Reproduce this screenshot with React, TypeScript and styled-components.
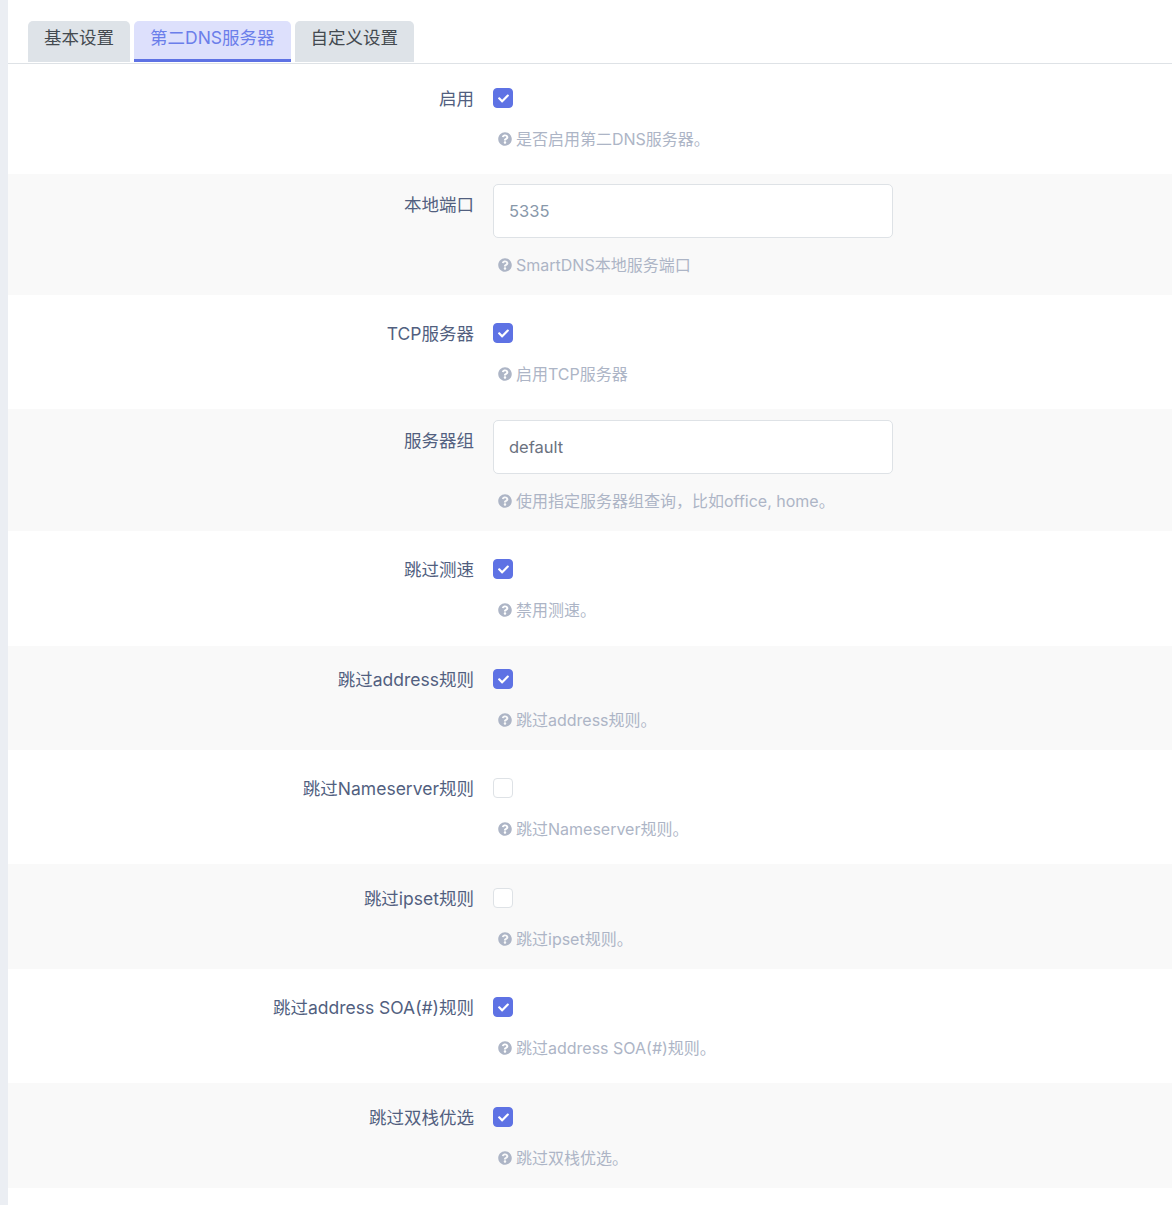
import React from "react";
import styled, { createGlobalStyle } from "styled-components";
import { FaCheck, FaQuestionCircle } from "react-icons/fa";

const GlobalStyle = createGlobalStyle`
  html, body {
    margin: 0;
    padding: 0;
    background: #ebeef3;
  }
  body {
    font-family: Inter, "Noto Sans CJK SC", sans-serif;
    -webkit-font-smoothing: antialiased;
  }
`;

const Page = styled.div`
  margin-left: 8px;
  height: 1205px;
  overflow: hidden;
  background: #fff;
`;

const TabBar = styled.ul`
  display: flex;
  gap: 4px;
  margin: 0;
  padding: 21px 20px 0;
  list-style: none;
  border-bottom: 1px solid #dee2e6;
  height: 42px;
`;

const Tab = styled.li<{ $active?: boolean }>`
  box-sizing: border-box;
  height: 41px;
  padding: 0 16px;
  border-radius: 5px 5px 0 0;
  font-size: 17.5px;
  line-height: 33px;
  background: ${({ $active }) => ($active ? "#dde0fc" : "#dee3e8")};
  color: ${({ $active }) => ($active ? "#6b7eea" : "#444a50")};
  border-bottom: 3px solid ${({ $active }) => ($active ? "#5e72e4" : "transparent")};
`;

const Row = styled.div<{ $height: number; $top: number; $shaded: boolean }>`
  box-sizing: border-box;
  display: grid;
  grid-template-columns: 466px 1fr;
  column-gap: 19px;
  height: ${({ $height }) => $height}px;
  padding-top: ${({ $top }) => $top}px;
  background: ${({ $shaded }) => ($shaded ? "#f9f9f9" : "#fff")};
`;

const Label = styled.label<{ $input: boolean }>`
  text-align: right;
  font-size: 17.5px;
  line-height: 22px;
  color: #525f7f;
  padding-top: ${({ $input }) => ($input ? "10px" : "0")};
`;

const Field = styled.div`
  display: flex;
  flex-direction: column;
  align-items: flex-start;
`;

const Box = styled.span<{ $on: boolean }>`
  box-sizing: border-box;
  display: flex;
  align-items: center;
  justify-content: center;
  width: 20px;
  height: 20px;
  border-radius: 4px;
  border: 1px solid ${({ $on }) => ($on ? "#5e72e4" : "#dee2e6")};
  background: ${({ $on }) => ($on ? "#5e72e4" : "#fff")};
  color: #fff;
  font-size: 11px;
`;

const TextInput = styled.div`
  box-sizing: border-box;
  width: 400px;
  height: 54px;
  padding: 0 15px;
  border: 1px solid #dee2e6;
  border-radius: 5px;
  background: #fff;
  font-size: 16.5px;
  line-height: 52px;
  color: #8898aa;
`;

const Hint = styled.div<{ $input: boolean }>`
  display: flex;
  align-items: center;
  gap: 4px;
  margin-top: ${({ $input }) => ($input ? "17px" : "21px")};
  padding-left: 5px;
  font-size: 16px;
  line-height: 20px;
  color: #adb5c6;
  white-space: nowrap;
  svg {
    font-size: 14px;
    flex: none;
  }
`;

type Item = {
  label: string;
  hint: string;
  height: number;
  top: number;
  checked?: boolean;
  value?: string;
  dark?: boolean;
};

const items: Item[] = [
  { label: "启用", hint: "是否启用第二DNS服务器。", height: 110, top: 24, checked: true },
  { label: "本地端口", hint: "SmartDNS本地服务端口", height: 121, top: 10, value: "5335" },
  { label: "TCP服务器", hint: "启用TCP服务器", height: 114, top: 28, checked: true },
  { label: "服务器组", hint: "使用指定服务器组查询，比如office, home。", height: 122, top: 11, value: "default", dark: true },
  { label: "跳过测速", hint: "禁用测速。", height: 115, top: 28, checked: true },
  { label: "跳过address规则", hint: "跳过address规则。", height: 104, top: 23, checked: true },
  { label: "跳过Nameserver规则", hint: "跳过Nameserver规则。", height: 114, top: 28 },
  { label: "跳过ipset规则", hint: "跳过ipset规则。", height: 105, top: 24 },
  { label: "跳过address SOA(#)规则", hint: "跳过address SOA(#)规则。", height: 114, top: 28, checked: true },
  { label: "跳过双栈优选", hint: "跳过双栈优选。", height: 105, top: 24, checked: true },
];

export default function App() {
  return (
    <Page>
      <GlobalStyle />
      <TabBar>
        <Tab>基本设置</Tab>
        <Tab $active>第二DNS服务器</Tab>
        <Tab>自定义设置</Tab>
      </TabBar>
      {items.map((item, i) => (
        <Row key={item.label} $height={item.height} $top={item.top} $shaded={i % 2 === 1}>
          <Label $input={!!item.value}>{item.label}</Label>
          <Field>
            {item.value ? (
              <TextInput style={item.dark ? { color: "#6b7280" } : undefined}>{item.value}</TextInput>
            ) : (
              <Box $on={!!item.checked}>{item.checked && <FaCheck />}</Box>
            )}
            <Hint $input={!!item.value}>
              <FaQuestionCircle />
              {item.hint}
            </Hint>
          </Field>
        </Row>
      ))}
    </Page>
  );
}
